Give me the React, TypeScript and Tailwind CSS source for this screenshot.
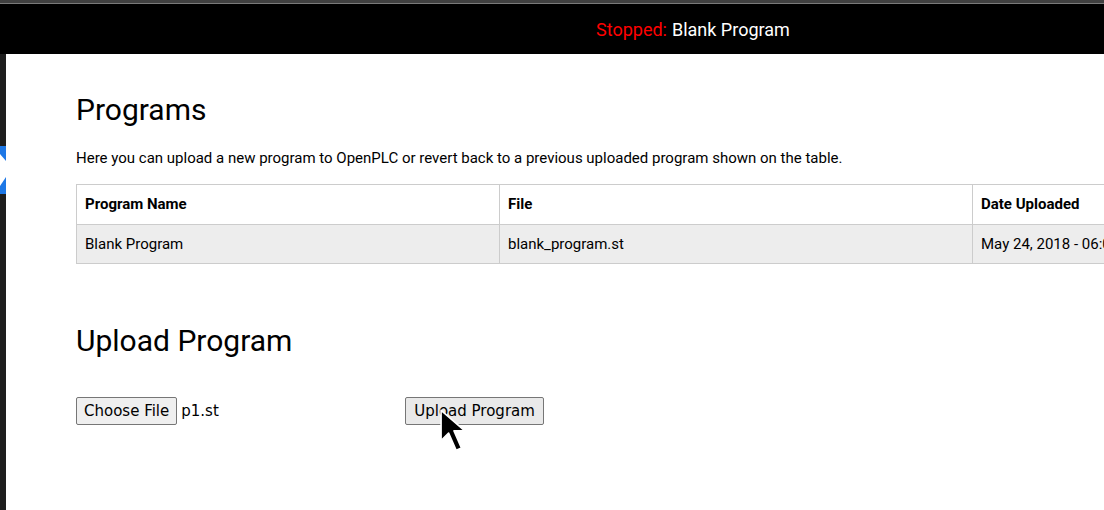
import React from "react";

const ROWS = [
  { name: "Blank Program", file: "blank_program.st", date: "May 24, 2018 - 06:03PM" },
];

function SideTab() {
  return (
    <svg width="6" height="48" viewBox="0 0 6 48" className="block">
      <rect width="6" height="48" fill="#1e78e6" />
      <polygon points="0,8 6,15 6,31 0,40" fill="#ffffff" />
    </svg>
  );
}

function Cursor() {
  return (
    <svg width="28" height="48" viewBox="0 0 26 44" className="absolute left-[440px] top-[409px]">
      <path
        d="M1 1 L1 29 L8 22 L15 38 L20 36 L13 20 L23 20 Z"
        fill="#000"
        stroke="#fff"
        strokeWidth="1.5"
        strokeLinejoin="round"
      />
    </svg>
  );
}

export default function App() {
  return (
    <div className="relative w-[1104px] h-[510px] overflow-hidden bg-white font-['Roboto',sans-serif]">
      <div className="h-[3px] bg-[#404040]" />
      <div className="h-[1px] bg-[#7a7a7a]" />
      <header className="h-[50px] bg-black flex items-center pl-[596px] text-[18px]">
        <span className="text-[#ff0000]">Stopped:</span>
        <span className="text-white ml-[5px]">Blank Program</span>
      </header>

      <div className="flex h-[456px]">
        <aside className="w-[6px] flex-shrink-0 bg-[#1e1e1e] pt-[92px]">
          <SideTab />
        </aside>

        <main className="flex-1 pl-[70px] pt-[36px]">
          <h2 className="text-[30px] leading-[40px] text-black">Programs</h2>
          <p className="mt-[18px] text-[15px] leading-[20px] text-black">
            Here you can upload a new program to OpenPLC or revert back to a previous uploaded program shown on the table.
          </p>

          <table className="mt-[16px] w-[1200px] border-collapse text-[15px] text-black table-fixed">
            <colgroup>
              <col className="w-[423px]" />
              <col className="w-[473px]" />
              <col />
            </colgroup>
            <thead>
              <tr className="h-[40px]">
                <th className="border border-[#cccccc] px-[8px] text-left font-bold">Program Name</th>
                <th className="border border-[#cccccc] px-[8px] text-left font-bold">File</th>
                <th className="border border-[#cccccc] px-[8px] text-left font-bold">Date Uploaded</th>
              </tr>
            </thead>
            <tbody>
              {ROWS.map((r) => (
                <tr key={r.file} className="h-[39px] bg-[#ededed]">
                  <td className="border border-[#cccccc] px-[8px]">{r.name}</td>
                  <td className="border border-[#cccccc] px-[8px]">{r.file}</td>
                  <td className="border border-[#cccccc] px-[8px] whitespace-nowrap overflow-hidden">{r.date}</td>
                </tr>
              ))}
            </tbody>
          </table>

          <h2 className="mt-[57px] text-[30px] leading-[40px] text-black">Upload Program</h2>

          <div className="mt-[36px] flex items-center font-['DejaVu_Sans',sans-serif] text-[15px] text-black">
            <button className="h-[28px] px-[7px] bg-[#efefef] border border-[#767676] rounded-[2px]">
              Choose File
            </button>
            <span className="ml-[4px] w-[224px]">p1.st</span>
            <button className="h-[28px] px-[8px] bg-[#e9e9e9] border border-[#767676] rounded-[2px]">
              Upload Program
            </button>
          </div>
        </main>
      </div>

      <Cursor />
    </div>
  );
}
